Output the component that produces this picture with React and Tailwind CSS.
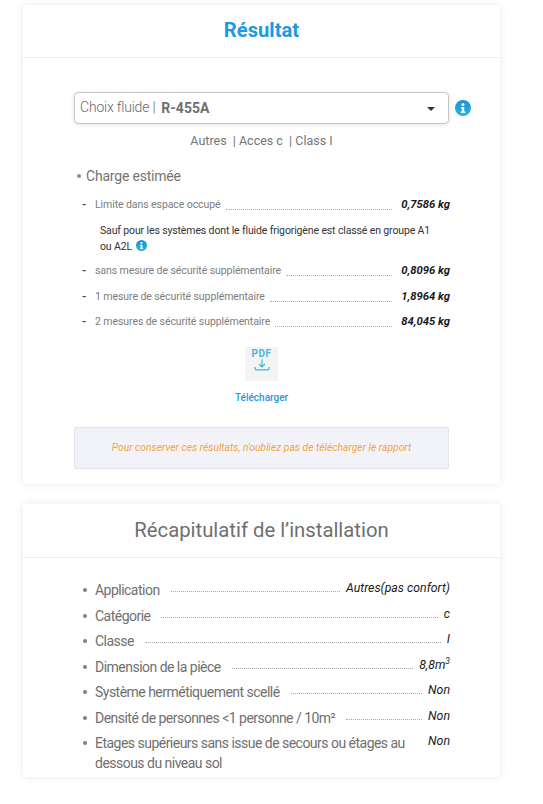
const Info = ({ s = 16 }) => (
  <svg width={s} height={s} viewBox="0 0 16 16" className="shrink-0">
    <defs>
      <linearGradient id="ig" x1="0" y1="0" x2="0" y2="1">
        <stop offset="0" stopColor="#1a8fd6" />
        <stop offset="1" stopColor="#2bb8dc" />
      </linearGradient>
    </defs>
    <circle cx="8" cy="8" r="8" fill="url(#ig)" />
    <circle cx="8" cy="4.4" r="1.5" fill="#fff" />
    <path d="M6 7h3.2v4.4H10.2V13H5.9v-1.6h1V8.6H6z" fill="#fff" />
  </svg>
);

const ChargeRow = ({ label, value, cls }) => (
  <div className={`flex items-center h-[16px] w-[376px] ${cls}`}>
    <span className="w-[21px] pl-[8px] text-[11px] font-bold text-[#444]">-</span>
    <span className="text-[10.5px] tracking-[-0.08px] text-[#7d7d7d] whitespace-nowrap">{label}</span>
    <span className="flex-1 ml-[5px] mr-[9px] border-b border-dotted border-[#b0b0b0] mt-[8px]" />
    <span className="text-[11.25px] font-bold italic text-[#1a1a1a] whitespace-nowrap">{value}</span>
  </div>
);

const RecapRow = ({ label, value, h = "h-[25.5px]", sup }) => (
  <div className={`flex items-start ${h}`}>
    <span className="w-[12px] pt-[8px] shrink-0">
      <span className="block w-[4px] h-[4px] rounded-full bg-[#808080]" />
    </span>
    <span className="text-[14px] tracking-[-0.52px] leading-[20px] text-[#6f6f6f] whitespace-nowrap">{label}</span>
    <span className="flex-1 ml-[11px] mr-[6px] border-b border-dotted border-[#aaa] mt-[11px]" />
    <span className="text-[12.3px] leading-[16px] italic text-[#1a1a1a] whitespace-nowrap">
      {value}
      {sup && <sup className="text-[8.5px] top-[-5px]">{sup}</sup>}
    </span>
  </div>
);

export default function App() {
  return (
    <div className="w-[543px] h-[804px] overflow-hidden bg-white font-['Roboto',sans-serif] pt-[5px] pl-[23px]">
      <div className="w-[477px] h-[479px] bg-white shadow-[0_0_8px_rgba(0,0,0,0.09)]">
        <div className="h-[53px] border-b border-[#efefef] flex items-center justify-center">
          <h1 className="text-[20.2px] font-bold text-[#1c9ae0] leading-none mt-[-2px]">Résultat</h1>
        </div>
        <div className="pt-[34px] pl-[51px] pr-[29px]">
          <div className="flex items-center">
            <div className="w-[375px] h-[32px] border border-[#c4c4c4] rounded-[4px] shadow-[0_1px_4px_rgba(0,0,0,0.1)] flex items-center pl-[5px] pr-[13px]">
              <span className="text-[14px] tracking-[-0.2px] font-light text-[#6a6a6a] mt-[-2px]">Choix fluide |</span>
              <span className="ml-[6px] text-[14px] font-bold text-[#6f6f6f]">R-455A</span>
              <span className="ml-auto w-0 h-0 border-x-[4px] border-x-transparent border-t-[4px] border-t-[#333] mt-[1px]" />
            </div>
            <span className="ml-[6px]"><Info /></span>
          </div>
          <div className="w-[375px] text-center text-[12.5px] text-[#757575] mt-[9px] leading-[15px]">
            Autres&nbsp; | Acces c&nbsp; | Class I
          </div>
          <div className="w-[375px]">
            <div className="flex items-center mt-[19px] h-[18px]">
              <span className="ml-[3px] w-[4px] h-[4px] rounded-full bg-[#888]" />
              <span className="ml-[5px] text-[14px] tracking-[-0.2px] text-[#747474]">Charge estimée</span>
            </div>
            <ChargeRow cls="mt-[12px]" label="Limite dans espace occupé" value="0,7586 kg" />
            <p className="ml-[26px] mr-[15px] mt-[10px] text-[10.5px] tracking-[-0.13px] leading-[16px] text-[#333]">
              Sauf pour les systèmes dont le fluide frigorigène est classé en groupe A1 ou A2L{" "}
              <span className="inline-block align-[-1px] ml-[1px]"><Info s={11} /></span>
            </p>
            <ChargeRow cls="mt-[8px]" label="sans mesure de sécurité supplémentaire" value="0,8096 kg" />
            <ChargeRow cls="mt-[10px]" label="1 mesure de sécurité supplémentaire" value="1,8964 kg" />
            <ChargeRow cls="mt-[9px]" label="2 mesures de sécurité supplémentaire" value="84,045 kg" />
            <div className="flex flex-col items-center mt-[17px]">
              <div className="w-[33px] h-[34px] bg-[#f4f4f4] flex flex-col items-center pt-[1px]">
                <span className="text-[10px] leading-[11px] font-bold tracking-[0.6px] text-[#4fb3e6]">PDF</span>
                <svg width="16" height="13" viewBox="0 0 16 13" fill="none" stroke="#3db7dc" strokeWidth="1.2">
                  <path d="M8 0.5v7M5 5l3 3 3-3" />
                  <path d="M1 8v1.8q0 1 1 1h12q1 0 1-1V8" />
                </svg>
              </div>
              <span className="mt-[11px] text-[10px] font-medium leading-[12px] text-[#2b97df]">Télécharger</span>
            </div>
            <div className="mt-[23px] h-[42px] bg-[#f2f3f8] border border-[#e3e4ea] rounded-[1px] flex items-center justify-center">
              <span className="text-[10.3px] italic text-[#f5a33b]">
                Pour conserver ces résultats, n'oubliez pas de télécharger le rapport
              </span>
            </div>
          </div>
        </div>
      </div>

      <div className="w-[477px] h-[273px] mt-[20px] bg-white shadow-[0_0_8px_rgba(0,0,0,0.09)]">
        <div className="h-[54px] border-b border-[#efefef] flex items-center justify-center">
          <h2 className="text-[20.3px] text-[#6f6f6f] leading-none mt-[-1px]">Récapitulatif de l’installation</h2>
        </div>
        <div className="pt-[22px] pl-[60px] pr-[50px]">
          <RecapRow label="Application" value="Autres(pas confort)" />
          <RecapRow label="Catégorie" value="c" />
          <RecapRow label="Classe" value="I" />
          <RecapRow label="Dimension de la pièce" value="8,8m" sup="3" />
          <RecapRow label="Système hermétiquement scellé" value="Non" />
          <RecapRow label="Densité de personnes <1 personne / 10m²" value="Non" />
          <div className="flex items-start">
            <span className="w-[12px] pt-[8px] shrink-0">
              <span className="block w-[4px] h-[4px] rounded-full bg-[#808080]" />
            </span>
            <span className="w-[320px] text-[14px] tracking-[-0.52px] leading-[20px] text-[#6f6f6f]">
              Etages supérieurs sans issue de secours ou étages au dessous du niveau sol
            </span>
            <span className="ml-auto text-[12.3px] leading-[16px] italic text-[#1a1a1a]">Non</span>
          </div>
        </div>
      </div>
    </div>
  );
}
